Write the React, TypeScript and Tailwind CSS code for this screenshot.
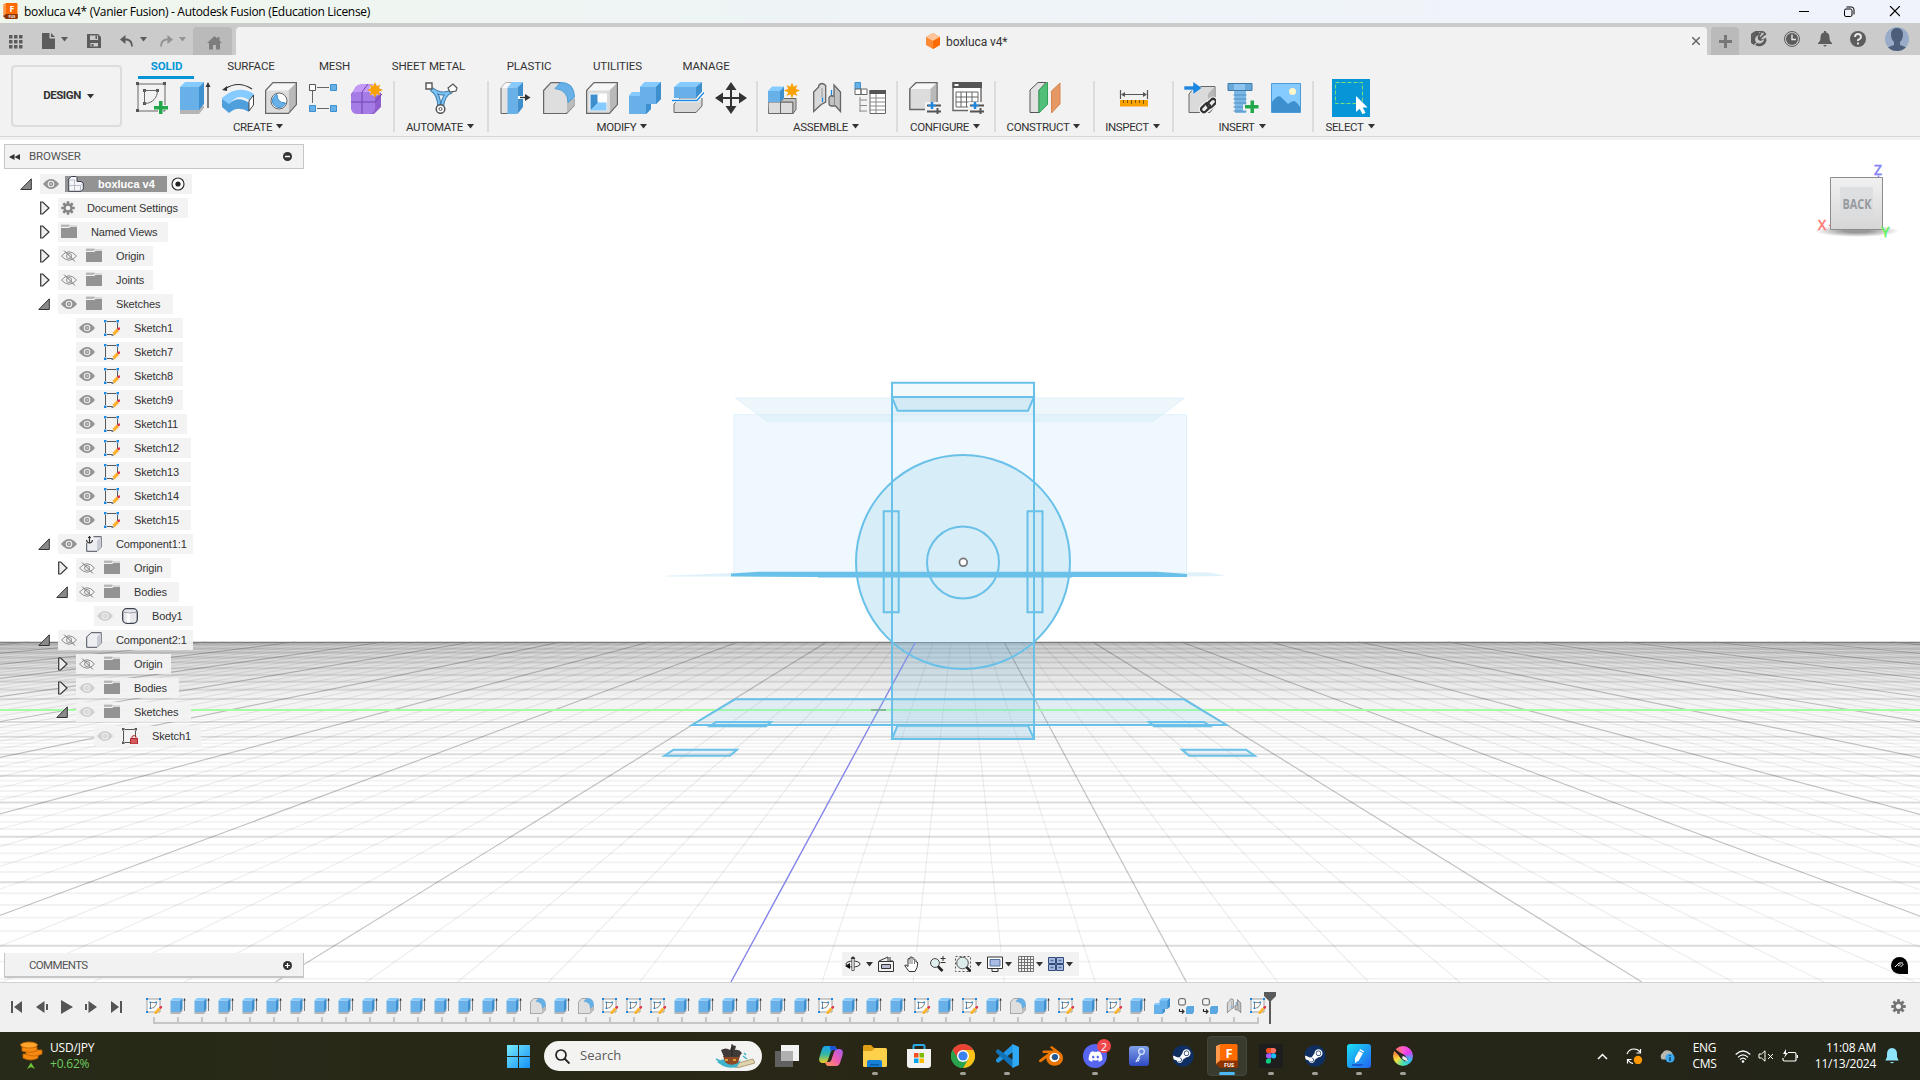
import React from 'react';
import { FaDiscord, FaSteam } from 'react-icons/fa';
import { SiBlender } from 'react-icons/si';

type P = { children: React.ReactNode; className?: string; vb?: string };

const Ico = ({ children, className = 'h-8 w-8', vb = '0 0 32 32' }: P) => (
  <svg viewBox={vb} className={`block shrink-0 ${className}`} fill="none">
    {children}
  </svg>
);

const Caret = ({ className = 'ml-1' }: { className?: string }) => (
  <svg viewBox="0 0 7 5" className={`h-[5px] w-[7px] shrink-0 ${className}`}>
    <path d="M0 0h7L3.5 4.5z" fill="currentColor" />
  </svg>
);

/* ---------- ribbon icons ---------- */

const SketchIcon = () => (
  <Ico>
    <path d="M2 2h27v27H2z" stroke="#666" strokeWidth="1" />
    <g fill="#555">
      <path d="M0 0h3v3H0zM27 0h3v3h-3zM0 27h3v3H0zM7 7h3v3H7zM20 7h3v3h-3zM7 20h3v3H7z" />
    </g>
    <path d="M8.500 8.500h13c0 7-5 13-13 13z" stroke="#666" strokeWidth="1" />
    <path d="M22 18h5v5h5v5h-5v5h-5v-5h-5v-5h5z" fill="#f2f2f2" />
    <path d="M23 19h3.500v5H32v3.500h-5.500V32H23v-4.500h-5V24h5z" fill="#22a84b" />
  </Ico>
);

const ExtrudeShape = () => (
  <>
    <path d="M1 27l4-3h20v2l-5 6H1z" fill="#b5b5b5" />
    <path d="M1 5h19v23H1z" fill="#68b1e8" />
    <path d="M1 5l5-5h19l-5 5z" fill="#85cbff" />
    <path d="M20 5l5-5v22l-5 6z" fill="#3d8fcd" />
    <path d="M29 3v23" stroke="#333" strokeWidth="1.200" />
    <path d="M26.500 5L29 0l2.500 5z" fill="#333" />
  </>
);

const RevolveIcon = () => (
  <Ico>
    <path d="M3 7Q16-2 30 7" stroke="#333" strokeWidth="1.200" />
    <path d="M0 8l5-4v5z" fill="#333" />
    <path d="M0 16Q16 2 32 12v5q-3 3-5 1-12-8-20 5l-7-3z" fill="#85cbff" />
    <path d="M0 17l7 5v9l-7-6zM7 22q9-9 20-1v9q-11-7-20 1z" fill="#4e9fdb" />
    <path d="M27 19l4.500-6v10L27 29z" fill="#fff" stroke="#444" />
  </Ico>
);

const GrayBox = () => (
  <>
    <path d="M.6 8.500L8 .6h23.400L23.500 8.500z" fill="#f7f7f7" />
    <path d="M23.500 8.500L31.400.6v22l-7.900 8.800z" fill="#b9b9b9" />
    <path d="M.6 8.500h22.900v22.900H.6z" fill="#dcdcdc" />
    <path d="M.6 8.500L8 .6h23.400v22l-7.900 8.800H.6z" stroke="#666" strokeWidth="1.200" />
  </>
);

const HoleIcon = () => (
  <Ico>
    <GrayBox />
    <circle cx="14" cy="19" r="8" fill="#fff" stroke="#666" />
    <path d="M12 12.500A6.700 6.700 0 1 0 20.500 21Q12 21 12 12.500z" fill="#68b1e8" stroke="#3d8fcd" />
  </Ico>
);

const PatternIcon = () => (
  <Ico>
    <path d="M9 5.500h12M4.500 9v12M9 26.500h12" stroke="#666" />
    <path d="M1.500 2.500h6v6h-6z" fill="#fff" stroke="#555" />
    <path d="M22.500 2.500h6v6h-6zM1.500 23.500h6v6h-6zM22.500 23.500h6v6h-6z" fill="#68b1e8" stroke="#3d8fcd" />
  </Ico>
);

const Star = ({ x, y }: { x: number; y: number }) => (
  <path
    transform={`translate(${x} ${y})`}
    d="M0-8L1.700-3.700 5.500-5.500 3.700-1.700 8 0 3.700 1.700 5.500 5.500 1.700 3.700 0 8-1.700 3.700-5.500 5.500-3.700 1.700-8 0-3.700-1.700-5.500-5.500-1.700-3.700z"
    fill="#f8a100"
  />
);

const FormIcon = () => (
  <Ico>
    <path d="M7 3h14l9 8v14l-7 7H7q-7-1-7-8V12z" fill="#8f5fd0" />
    <rect y="9" width="24" height="23" rx="6" fill="#a57ce5" />
    <path d="M2 11Q3 3 10 2h14q4 1 6 6l-7 2H6z" fill="#c39af5" />
    <path d="M0 20h24l7-8M11 10v22M11 10l6-8" stroke="#7140b3" />
    <circle cx="24" cy="8" r="6" fill="#f2f2f2" opacity=".6" />
    <Star x={24} y={8} />
  </Ico>
);

const AutomateIcon = () => (
  <Ico className="h-8 w-[34px]" vb="0 0 34 32">
    <path d="M7 7q9 6 8 18M28 9q-9 3-10 16M8 7q8 7 19 3" stroke="#3d7fae" strokeWidth="4" />
    <path d="M7 7q9 6 8 18M28 9q-9 3-10 16M8 7q8 7 19 3" stroke="#7dc3f3" strokeWidth="2" />
    <path d="M2 1h6v6H2z" fill="#fff" stroke="#555" strokeWidth="1.400" />
    <path d="M24 6l5-4 4 4-1 3-6 1z" fill="#fff" stroke="#555" strokeWidth="1.200" />
    <circle cx="16.500" cy="27" r="4.300" fill="#fff" stroke="#555" strokeWidth="1.500" />
    <circle cx="16.500" cy="27" r="1.500" stroke="#555" />
  </Ico>
);

const PressPull = () => (
  <Ico>
    <path d="M1 6l5-5.500h9V25l-6 6.500H1z" fill="#e2e2e2" stroke="#666" />
    <path d="M1 6l5-5.500h9L9 6z" fill="#fafafa" />
    <path d="M7.500 5.500h10V32h-10z" fill="#68b1e8" />
    <path d="M7.500 5.500L12 0h11l-5.500 5.500z" fill="#85cbff" />
    <path d="M17.500 5.500L23 0v25l-5.500 7z" fill="#3d8fcd" />
    <path d="M18 15.500h11" stroke="#fff" strokeWidth="3" />
    <path d="M20 15.500h7" stroke="#333" strokeWidth="1.400" />
    <path d="M25 12l5.500 3.500L25 19z" fill="#333" />
  </Ico>
);

const FilletShape = () => (
  <>
    <path d="M.6 8.500L8 .6h9q9 3 14 17v6l-7.500 7.900H.6z" fill="#dedede" stroke="#666" strokeWidth="1.200" />
    <path d="M24 20l7.400-5v8.500L24 31z" fill="#bcbcbc" />
    <path d="M12 6.500L17.500.6Q31 0 31.500 15L25 20.500Q25 8 12 6.500z" fill="#68b1e8" stroke="#4c9dd8" />
  </>
);

const ShellIcon = () => (
  <Ico>
    <GrayBox />
    <path d="M3.500 11.500h17.500v17H3.500z" fill="#fff" />
    <path d="M4.500 12.500h8v8l-8 8z" fill="#3d8fcd" />
    <path d="M11.500 12.500h9v8h-9z" fill="#fff" />
    <path d="M4.500 28.500l7.500-8h8.500v8z" fill="#85cbff" />
  </Ico>
);

const CombineShape = () => (
  <>
    <path d="M0 14l3-4h8V5l5-5h16v17l-5 5h-5v5l-5 5H0z" fill="#68b1e8" />
    <path d="M11 5l5-5h16l-5 5zM0 14l3.500-4H11v4z" fill="#85cbff" />
    <path d="M27 5l5-5v17l-5 5zM22 22v5l-5 5V22z" fill="#3d8fcd" />
  </>
);

const SplitIcon = () => (
  <Ico>
    <path d="M2 22l6-6h22v8l-6 6.500H2z" fill="#d8d8d8" stroke="#666" />
    <path d="M2 5h22v11H2z" fill="#68b1e8" />
    <path d="M2 5l6-5h22l-6 5z" fill="#85cbff" />
    <path d="M24 5l6-5v10l-6 6z" fill="#3d8fcd" />
    <path d="M0 18.500h25l7-8" stroke="#fff" strokeWidth="3.500" />
    <path d="M0 18.500h25l7-8" stroke="#1b87e0" strokeWidth="1.400" />
  </Ico>
);

const MoveIcon = () => (
  <Ico>
    <path d="M16 5v22M5 16h22" stroke="#333" strokeWidth="2" />
    <path d="M16 0l5.500 8h-11zM16 32l5.500-8h-11zM0 16l8-5.500v11zM32 16l-8-5.500v11z" fill="#333" />
  </Ico>
);

const NewComp = () => (
  <Ico>
    <path d="M0 20h12.500v11.500H.5zM12.500 20h12.500v11.500H12.500z" fill="#dcdcdc" stroke="#666" />
    <path d="M12.500 20l3.500-3.500h12v11L25 31.500V20z" fill="#c4c4c4" stroke="#666" />
    <path d="M0 9h12v11H0z" fill="#68b1e8" />
    <path d="M0 9l4-4.500h12L12 9z" fill="#85cbff" />
    <path d="M12 9l4-4.500V16l-4 4z" fill="#3d8fcd" />
    <Star x={24} y={8.500} />
  </Ico>
);

const JointShape = () => (
  <g transform="translate(2 0)">
    <path d="M.7 10l5-5V3.500q3-4 7 0V20l-4.500 2.500L.7 29.500z" fill="#d8d8d8" stroke="#666" strokeWidth="1.300" />
    <path d="M9 6v9" stroke="#999" />
    <path d="M27.500 29.500l-5-5.500h-3.500q-3 0-3-2.500v-6q2-3 5-1V3l6.500 7z" fill="#c2c2c2" stroke="#666" strokeWidth="1.300" />
    <path d="M21.500 15v8" stroke="#888" />
    <path d="M9.500 15.500V20M18.500 8v5" stroke="#1b87e0" strokeWidth="1.300" />
  </g>
);

const BomIcon = () => (
  <Ico>
    <path d="M1 .5h5.500V7H1z" fill="#68b1e8" stroke="#3d8fcd" />
    <path d="M1 7h6v5.500H1zM7 7h6v5.500H7z" fill="#fff" stroke="#666" />
    <path d="M6 15v15M6 18h7M6 23.500h7M6 29h7" stroke="#888" />
    <path d="M16 9h15.500v22.500H16z" fill="#fff" stroke="#666" />
    <path d="M15.500 8h16.500v4H15.500z" fill="#555" />
    <path d="M16 16h15M16 20h15M16 24h15M16 28h15M22 12v19" stroke="#888" />
  </Ico>
);

const Sliders = () => (
  <>
    <path d="M16 20h16v12H16z" fill="#f2f2f2" />
    <path d="M18 23.500h14M18 29.500h14" stroke="#555" strokeWidth="2" />
    <path d="M23 20v7" stroke="#1b87e0" strokeWidth="2.500" />
    <path d="M19 23.500h8" stroke="#1b87e0" strokeWidth="1.600" />
    <path d="M28.500 26v6" stroke="#555" strokeWidth="2" />
  </>
);

const ConfigIcon = () => (
  <Ico>
    <path d="M.8 7L7 .8h21V21l-6 6.500H.8z" fill="#dcdcdc" stroke="#666" strokeWidth="1.400" />
    <path d="M1.500 7l6-5.500H27L21.500 7z" fill="#f8f8f8" />
    <path d="M21.500 7L27.300 1.500V21l-5.800 6z" fill="#b9b9b9" />
    <Sliders />
  </Ico>
);

const ConfigTable = () => (
  <Ico>
    <path d="M1 1h28v27.500H1z" fill="#fff" stroke="#666" strokeWidth="1.400" />
    <path d="M.500 0H30v6H.500z" fill="#555" />
    <path d="M2.500 2h4v2h-4z" fill="#fff" />
    <path d="M4 10h22v15H4zM4 15h22M4 20h22M9 10v15M14.500 10v15M20 10v15" stroke="#666" />
    <Sliders />
  </Ico>
);

const ConstructIcon = () => (
  <Ico>
    <path d="M1 8l8-7.500h8L10 8v22.500H1z" fill="#e2e2e2" stroke="#555" />
    <path d="M10 8l8.500-8v22.500L10 31z" fill="#52bf78" stroke="#35a25c" />
    <path d="M22.500 9L31 1v21l-8.500 9z" fill="#e59863" stroke="#d58550" />
  </Ico>
);

const InspectIcon = () => (
  <Ico>
    <path d="M2.500 8v9M29.500 8v9M4 12.500h24" stroke="#555" strokeWidth="1.200" />
    <path d="M3 12.500l4-2.500v5zM29 12.500L25 10v5z" fill="#555" />
    <path d="M2 18h28v6.500H2z" fill="#f8a100" />
    <path d="M5.500 18v3M9.500 18v3M13.500 18v4M17.500 18v3M21.500 18v3M25.500 18v4" stroke="#7d5500" />
  </Ico>
);

const InsertLink = () => (
  <Ico>
    <path d="M5 12l6-7.500h20V24l-5 6.500H5z" fill="#dadada" stroke="#666" />
    <path d="M24 12l6.500-7v19L24 30z" fill="#b7b7b7" />
    <path d="M0 4h9V-.500L18 6 9 12.500V8H0z" fill="#1b87e0" stroke="#f2f2f2" strokeWidth=".6" />
    <g stroke="#f2f2f2" strokeWidth="5">
      <rect x="16.500" y="23" width="10" height="5.500" rx="2.750" transform="rotate(-45 21.500 25.750)" />
      <rect x="22.500" y="18.500" width="10" height="5.500" rx="2.750" transform="rotate(-45 27.500 21.250)" />
    </g>
    <g stroke="#333" strokeWidth="2.200">
      <rect x="16.500" y="23" width="10" height="5.500" rx="2.750" transform="rotate(-45 21.500 25.750)" />
      <rect x="22.500" y="18.500" width="10" height="5.500" rx="2.750" transform="rotate(-45 27.500 21.250)" />
    </g>
  </Ico>
);

const BoltIcon = () => (
  <Ico>
    <path d="M1 1.500h24v7H1z" fill="#68a9da" />
    <path d="M7 1.500h11v7H7z" fill="#8cc6f0" />
    <path d="M1 1.500h24v7H1z" stroke="#3e79a8" />
    <path d="M7 9h12v22H8z" fill="#7bb8e6" />
    <path d="M6.500 13h13M6.500 17h13M6.500 21h13M6.500 25h13M6.500 29h13" stroke="#4f8ebf" />
    <path d="M22 17h6v5.500h4v6h-4V33h-6v-4.500h-6v-6h6z" fill="#f2f2f2" />
    <path d="M23.500 18.500H27V23h4.500v3.500H27V31h-3.500v-4.500H18V23h5.500z" fill="#22a84b" />
  </Ico>
);

const ImageIcon = () => (
  <Ico>
    <path d="M2 2h28v28H2z" fill="#85cbff" />
    <path d="M2 20q6-8 9-5l7 7q4-3 6-3 3 1 6 6v5H2z" fill="#3d8fcd" />
    <circle cx="22.500" cy="9.500" r="3.500" fill="#fdf6c8" />
    <path d="M1.500 1.500h29v29h-29z" stroke="#4a9bd6" />
  </Ico>
);

const SelectIcon = () => (
  <Ico className="h-[38px] w-[38px]" vb="0 0 38 38">
    <path d="M0 0h38v38H0z" fill="#0696d7" />
    <path d="M3.500 3.500h27v21h-27z" stroke="#7be07b" strokeDasharray="4 2" />
    <path d="M24 17v16l3.700-3.300 2.800 5.500 3-1.500-2.800-5.200h5z" fill="#fff" />
  </Ico>
);

const groups: { label: string; w: string; icons: React.ReactNode[] }[] = [
  {
    label: 'CREATE',
    w: 'w-[266px] pr-[2px]',
    icons: [<SketchIcon />, <Ico><ExtrudeShape /></Ico>, <RevolveIcon />, <HoleIcon />, <PatternIcon />, <FormIcon />],
  },
  { label: 'AUTOMATE', w: 'w-[92px]', icons: [<AutomateIcon />] },
  {
    label: 'MODIFY',
    w: 'w-[267px] pl-[1px]',
    icons: [<PressPull />, <Ico><FilletShape /></Ico>, <ShellIcon />, <Ico><CombineShape /></Ico>, <SplitIcon />, <MoveIcon />],
  },
  { label: 'ASSEMBLE', w: 'w-[138px]', icons: [<NewComp />, <Ico><JointShape /></Ico>, <BomIcon />] },
  { label: 'CONFIGURE', w: 'w-[96px]', icons: [<ConfigIcon />, <ConfigTable />] },
  { label: 'CONSTRUCT', w: 'w-[97px]', icons: [<ConstructIcon />] },
  { label: 'INSPECT', w: 'w-[77px]', icons: [<InspectIcon />] },
  { label: 'INSERT', w: 'w-[138px]', icons: [<InsertLink />, <BoltIcon />, <ImageIcon />] },
  { label: 'SELECT', w: 'w-[74px]', icons: [<SelectIcon />] },
];

const tabs = [
  ['SOLID', 'w-[56px]'],
  ['SURFACE', 'w-[73px]'],
  ['MESH', 'w-[54px]'],
  ['SHEET METAL', 'w-[94px]'],
  ['PLASTIC', 'w-[67px]'],
  ['UTILITIES', 'w-[70px]'],
  ['MANAGE', 'w-[67px]'],
];

/* ---------- header ---------- */

const FusionLogo = ({ className }: { className: string }) => (
  <Ico className={className} vb="0 0 22 24">
    <path d="M0 2L5 0v22l-5-2z" fill="#ff9a4d" />
    <path d="M4 0h16q1.500 0 1.500 1.500V17H4z" fill="#ff6b00" />
    <path d="M0 20l4-3.500h18V22q0 2-2 2H4z" fill="#8c3400" />
    <text x="13" y="13.500" fontSize="13" fontWeight="700" fill="#fff" textAnchor="middle" fontFamily="Open Sans, sans-serif">F</text>
    <text x="13" y="22.500" fontSize="5.500" fontWeight="700" fill="#fff" textAnchor="middle" fontFamily="Open Sans, sans-serif">FUS</text>
  </Ico>
);

const TitleBar = () => (
  <div className="flex h-[23px] items-center bg-linear-to-r from-[#eff6ec] via-[#eef4f8] to-[#f0f3fb] pl-[3px]">
    <FusionLogo className="-mt-px h-4 w-[15px]" />
    <div className="ml-[6px] text-[12px] tracking-[-0.3px] text-black font-['Open_Sans',sans-serif]">
      boxluca v4* (Vanier Fusion) - Autodesk Fusion (Education License)
    </div>
    <Ico className="mr-5 ml-auto h-3 w-[101px]" vb="0 0 101 12">
      <path d="M0 5.500h10" stroke="#000" />
      <rect x="45.500" y="3" width="7.500" height="7.500" rx="1.500" stroke="#000" />
      <path d="M47.500 1h5q2.500 0 2.500 2.500V8.500" stroke="#000" />
      <path d="M91 0l10 10M101 0L91 10" stroke="#000" strokeWidth="1.200" />
    </Ico>
  </div>
);

const TabBar = () => (
  <div className="flex h-8 bg-[#cbcbcb] pt-1 text-[#5c5c5c]">
    <div className="flex w-[193px] items-center pb-[7px]">
      <Ico className="mt-2 ml-2 h-4 w-4" vb="0 0 16 16">
        <path
          d="M1 1h3.500v3.500H1zM6 1h3.500v3.500H6zM11 1h3.500v3.500H11zM1 6h3.500v3.500H1zM6 6h3.500v3.500H6zM11 6h3.500v3.500H11zM1 11h3.500v3.500H1zM6 11h3.500v3.500H6zM11 11h3.500v3.500H11z"
          fill="currentColor"
        />
      </Ico>
      <Ico className="mt-1.5 ml-[17px] h-4 w-[14px]" vb="0 0 14 16">
        <path d="M1 0h7.500v5.500H14V16H1zM10 0l4 4h-4z" fill="currentColor" />
      </Ico>
      <Caret className="mt-1 ml-1.5" />
      <Ico className="mt-1.5 ml-[19px] h-[14px] w-[14px]" vb="0 0 14 14">
        <path d="M0 0h11l3 3v11H0z" fill="currentColor" />
        <path d="M3 1.500h8V6H3zM3.500 9h7.500v3.500H3.500z" fill="#cbcbcb" />
        <path d="M8.500 1.500H10V5H8.500zM4.500 10h2v2.500h-2z" fill="currentColor" />
      </Ico>
      <Ico className="mt-1.5 ml-[19px] h-3 w-[13px]" vb="0 0 13 12">
        <path d="M3 4.500h4q5 1 5 7" stroke="currentColor" strokeWidth="1.800" />
        <path d="M5.500 0v9L0 4.500z" fill="currentColor" />
      </Ico>
      <Caret className="mt-1 ml-[7px]" />
      <Ico className="mt-1.5 ml-[13px] h-3 w-[13px] opacity-50" vb="0 0 13 12">
        <path d="M10 4.500H6q-5 1-5 7" stroke="currentColor" strokeWidth="1.800" />
        <path d="M7.500 0v9L13 4.500z" fill="currentColor" />
      </Ico>
      <Caret className="mt-1 ml-[6px] opacity-50" />
    </div>
    <div className="flex w-[39px] items-center justify-center rounded-t-[4px] bg-[#bababa] pt-1 pl-[3px]">
      <Ico className="h-[14px] w-[15px]" vb="0 0 15 14">
        <path d="M7.500 0L0 7h2v6.500h4V9h3v4.500h4V7h2l-2.500-2.500V1H10.500v1.800z" fill="#7d7d7d" />
      </Ico>
    </div>
    <div className="ml-1 flex w-[1471px] items-center rounded-t-[4px] bg-[#f2f2f2] text-[#333]">
      <Ico className="ml-[690px] h-4 w-[14px]" vb="0 0 14 16">
        <path d="M7 0l7 4v8l-7 4-7-4V4z" fill="#ff8a35" />
        <path d="M7 0l7 4-7 4-7-4z" fill="#ffc49a" />
        <path d="M14 4v8l-7 4V8z" fill="#ff6b00" />
      </Ico>
      <span className="mt-0.5 ml-[6px] text-[12px] tracking-[-0.1px] font-['Roboto',sans-serif]">boxluca v4*</span>
      <Ico className="mr-[7px] ml-auto h-2 w-2" vb="0 0 8 8">
        <path d="M0 0l8 8M8 0L0 8" stroke="#666" strokeWidth="1.500" />
      </Ico>
    </div>
    <div className="ml-1 flex w-7 items-center justify-center rounded-t-[4px] bg-[#bababa]">
      <Ico className="h-[13px] w-[13px]" vb="0 0 13 13">
        <path d="M5 0h3v5h5v3H8v5H5V8H0V5h5z" fill="#777" />
      </Ico>
    </div>
    <div className="ml-3 flex items-start gap-[17px] pt-1">
      <Ico className="h-4 w-4" vb="0 0 16 16">
        <path d="M6 1.200A7 7 0 0 0 3 13l2.500-1.500A4 4 0 0 1 6 5l1.500-1z" fill="#5c5c5c" />
        <path d="M9.500 1L6.500 6.500l1 2.500 2.500 1L15 6.500l.500 3A7.500 7.500 0 0 1 4 14l2-2q5 1.500 7-3" fill="#5c5c5c" />
        <path d="M5 1q5-2.500 9 2l-3 3-2-2zM6 1.500A6 6 0 0 0 3.500 13" stroke="#5c5c5c" strokeWidth="2.200" />
        <path d="M12.500 2L9 5.500M14 5l-3.500 3" stroke="#cbcbcb" strokeWidth="1.200" />
      </Ico>
      <Ico className="h-4 w-4" vb="0 0 16 16">
        <circle cx="8" cy="8" r="7.500" stroke="#5c5c5c" />
        <circle cx="8" cy="8" r="6" fill="#5c5c5c" />
        <path d="M8 3.500V8.500h4" stroke="#e8e8e8" strokeWidth="1.400" />
      </Ico>
      <Ico className="h-4 w-4" vb="0 0 16 16">
        <path d="M7 0h2v1.500q3.500.5 3.500 5 0 4 2.500 5.500v1H1v-1q2.500-1.500 2.500-5.500 0-4.500 3.500-5zM6 14h4l-2 1.800z" fill="#5c5c5c" />
      </Ico>
      <Ico className="h-4 w-4" vb="0 0 16 16">
        <circle cx="8" cy="8" r="8" fill="#5c5c5c" />
        <path d="M5 6q0-3 3-3t3 2.700Q11 7.500 8 9v1M8 11.500v2" stroke="#e8e8e8" strokeWidth="1.900" />
      </Ico>
      <Ico className="-mt-1 ml-0.5 h-6 w-6" vb="0 0 24 24">
        <circle cx="12" cy="12" r="12" fill="#98acc9" />
        <path d="M12 1c-4 0-6 3-6 6 0 4 1 6 3 8v3q-4 1-6 2.500Q7 24 12 24t9-3.500Q19 19 15 18v-3c2-2 3-4 3-8 0-3-2-6-6-6z" fill="#4c5e79" />
      </Ico>
    </div>
  </div>
);

const Ribbon = () => (
  <div className="flex h-[85px] border-b-4 border-[#f2f2f2] bg-[#f2f2f2] text-[11.5px] text-[#333] font-['Roboto',sans-serif]">
    <div className="flex h-[82px] w-full border-b border-[#d6d6d6]">
      <div className="mt-[10px] ml-[11px] flex h-[62px] w-[111px] items-center justify-center rounded-[4px] border-2 border-[#dcdcdc] pl-1 text-[11.5px] font-bold tracking-[-0.45px]">
        DESIGN
        <Caret className="ml-[6px]" />
      </div>
      <div className="flex flex-col">
        <div className="ml-4 flex h-6 gap-5 leading-[22px]">
          {tabs.map(([t, w], i) => (
            <div
              key={t}
              className={`${w} h-6 whitespace-nowrap border-b-3 pl-px text-center tracking-[-0.1px] ${
                i === 0 ? 'border-[#0696d7] font-bold text-[#0696d7]' : 'border-transparent'
              }`}
            >
              {t}
            </div>
          ))}
        </div>
        <div className="ml-[5px] flex">
          {groups.map((g) => (
            <div key={g.label} className="flex">
              <div className={`${g.w} flex flex-col items-center`}>
                <div className="mt-px flex h-[36px] items-center gap-[11px]">
                  {g.icons.map((ic, i) => (
                    <React.Fragment key={i}>{ic}</React.Fragment>
                  ))}
                </div>
                <div className="mt-[3px] flex items-center pr-[2px] leading-4 tracking-[-0.35px]">
                  {g.label}
                  <Caret className="-mt-0.5 ml-1" />
                </div>
              </div>
              {g.label !== 'SELECT' && <div className="mt-0.5 h-[51px] w-0.5 bg-[#dcdcdc]" />}
            </div>
          ))}
        </div>
      </div>
    </div>
  </div>
);

/* ---------- browser tree ---------- */

const Eye = ({ mode }: { mode: string }) => (
  <Ico className="h-3 w-4" vb="0 0 16 12">
    {mode === 'off' ? (
      <>
        <path d="M.5 6Q8-2.500 15.500 6 8 14.500.5 6z" stroke="#8c8c8c" />
        <circle cx="8" cy="6" r="2.500" stroke="#8c8c8c" />
        <path d="M3 .5l11 11" stroke="#777" />
      </>
    ) : (
      <g opacity={mode === 'dim' ? 0.35 : 1}>
        <path d="M0 6Q8-4 16 6 8 16 0 6z" fill="#939393" />
        <circle cx="8" cy="6" r="3.300" fill="#f2f2f2" />
        <circle cx="8" cy="6" r="2.200" fill="#939393" />
        <circle cx="8" cy="6" r=".8" fill="#f2f2f2" />
      </g>
    )}
  </Ico>
);

const TreeIcon = ({ kind }: { kind: string }) => {
  if (kind === 'folder')
    return (
      <Ico className="h-4 w-4" vb="0 0 16 16">
        <path d="M0 4h8l1.500-1H16v11H0z" fill="#939393" />
        <path d="M0 2.500h7.500l1-1.500H0zM9 2h7" stroke="#b5b5b5" strokeWidth=".8" fill="#b5b5b5" />
      </Ico>
    );
  if (kind === 'sketch' || kind === 'locked') {
    const lock = kind === 'locked';
    return (
      <Ico className="h-4 w-4" vb="0 0 16 16">
        <path d="M3 1.500h9M1.500 3v10M13.500 3v6M3 14.500h5" stroke="#555" />
        <path d="M0 0h2.500v2.500H0zM12.500 0H15v2.500h-2.500zM0 13.500h2.500V16H0z" fill={lock ? '#555' : '#1b87e0'} />
        {lock ? (
          <>
            <path d="M8.500 10.500h7v5.500h-7z" fill="#d35a5f" stroke="#b3282d" />
            <path d="M10 10V8.500q2-2 4 0V10" stroke="#b3282d" />
          </>
        ) : (
          <>
            <path d="M8.500 13l4-4.500 2.500 2.500-4.500 4.500z" fill="#fbb42c" />
            <path d="M13 9l1.200-1.500H16v2l-1.500 1z" fill="#e8334a" />
            <path d="M7.500 14.200h2V16h-2z" fill="#777" />
          </>
        )}
      </Ico>
    );
  }
  if (kind === 'gear') return <Gear className="-mr-0.5 h-[14px] w-[14px] text-[#858585]" />;
  if (kind === 'body')
    return (
      <Ico className="h-4 w-4" vb="0 0 16 16">
        <rect x=".7" y=".7" width="14.600" height="14.600" rx="4" fill="#e8e9ec" stroke="#3c4250" strokeWidth="1.300" />
        <path d="M5 4h3v10.500H5z" fill="#fff" />
        <path d="M1 4q7 2 14 0" stroke="#9da0a8" />
      </Ico>
    );
  if (kind === 'root')
    return (
      <Ico className="h-4 w-4" vb="0 0 16 16">
        <path d="M.7 3l2.500-2.500H8l1 1V5.500h4l2.300 1.500V13L13 15.300H.7z" fill="#f5f6f9" stroke="#3c4250" />
        <path d="M6.500 9.500h6l2.500-2M12.500 9.500v5.500M6.500 4v11M1 9.500h5.500M1 4h5.500" stroke="#b9bcc6" />
      </Ico>
    );
  return (
    <Ico className="h-4 w-4" vb="0 0 16 16">
      <path d="M.7 5L5 .7h10.300V11L11 15.300H.7z" fill="#eceef1" stroke="#4a4f5c" />
      <path d="M11 5l4.300-4.300V11L11 15.300z" fill="#c9ccd3" />
      {kind === 'anchor' && (
        <>
          <path d="M0-1h7.500v8H0z" fill="#f2f2f2" />
          <path d="M3.500 0v6.500M2 1.500h3M.5 4q.5 3 3 3t3-3" stroke="#333" strokeWidth="1.200" />
        </>
      )}
    </Ico>
  );
};

const Gear = ({ className }: { className: string }) => (
  <Ico className={className} vb="0 0 16 16">
    <g stroke="currentColor" strokeWidth="3">
      <path d="M8 .3v15.400M.3 8h15.400M2.600 2.600l10.800 10.800M13.400 2.600L2.600 13.400" />
    </g>
    <circle cx="8" cy="8" r="5.300" fill="currentColor" />
    <circle cx="8" cy="8" r="2.700" fill="#f2f2f2" />
  </Ico>
);

const Arrow = ({ open }: { open: boolean }) =>
  open ? (
    <Ico className="mr-2 h-3 w-3" vb="0 0 12 12">
      <path d="M11.300 0.800v10.700H.800z" fill="#8a8a8a" stroke="#333" />
    </Ico>
  ) : (
    <Ico className="mr-2 h-[14px] w-[10px]" vb="0 0 10 14">
      <path d="M.7 1h2L9 7l-6.300 6h-2z" fill="#eee" stroke="#333" strokeWidth="1.200" />
    </Ico>
  );

type Row = { t: string; lv: number; w: string; arrow?: 'open' | 'closed'; eye?: string; icon: string };

const rows: Row[] = [
  { t: 'Document Settings', lv: 1, w: 'w-[130px]', arrow: 'closed', icon: 'gear' },
  { t: 'Named Views', lv: 1, w: 'w-[110px]', arrow: 'closed', icon: 'folder' },
  { t: 'Origin', lv: 1, w: 'w-[95px]', arrow: 'closed', eye: 'off', icon: 'folder' },
  { t: 'Joints', lv: 1, w: 'w-[95px]', arrow: 'closed', eye: 'off', icon: 'folder' },
  { t: 'Sketches', lv: 1, w: 'w-[115px]', arrow: 'open', eye: 'on', icon: 'folder' },
  { t: 'Sketch1', lv: 2, w: 'w-[107px]', eye: 'on', icon: 'sketch' },
  { t: 'Sketch7', lv: 2, w: 'w-[107px]', eye: 'on', icon: 'sketch' },
  { t: 'Sketch8', lv: 2, w: 'w-[107px]', eye: 'on', icon: 'sketch' },
  { t: 'Sketch9', lv: 2, w: 'w-[107px]', eye: 'on', icon: 'sketch' },
  { t: 'Sketch11', lv: 2, w: 'w-[111px]', eye: 'on', icon: 'sketch' },
  { t: 'Sketch12', lv: 2, w: 'w-[115px]', eye: 'on', icon: 'sketch' },
  { t: 'Sketch13', lv: 2, w: 'w-[115px]', eye: 'on', icon: 'sketch' },
  { t: 'Sketch14', lv: 2, w: 'w-[115px]', eye: 'on', icon: 'sketch' },
  { t: 'Sketch15', lv: 2, w: 'w-[115px]', eye: 'on', icon: 'sketch' },
  { t: 'Component1:1', lv: 1, w: 'w-[135px]', arrow: 'open', eye: 'on', icon: 'anchor' },
  { t: 'Origin', lv: 2, w: 'w-[95px]', arrow: 'closed', eye: 'off', icon: 'folder' },
  { t: 'Bodies', lv: 2, w: 'w-[103px]', arrow: 'open', eye: 'off', icon: 'folder' },
  { t: 'Body1', lv: 3, w: 'w-[99px]', eye: 'dim', icon: 'body' },
  { t: 'Component2:1', lv: 1, w: 'w-[135px]', arrow: 'open', eye: 'off', icon: 'comp' },
  { t: 'Origin', lv: 2, w: 'w-[95px]', arrow: 'closed', eye: 'off', icon: 'folder' },
  { t: 'Bodies', lv: 2, w: 'w-[103px]', arrow: 'closed', eye: 'dim', icon: 'folder' },
  { t: 'Sketches', lv: 2, w: 'w-[115px]', arrow: 'open', eye: 'dim', icon: 'folder' },
  { t: 'Sketch1', lv: 3, w: 'w-[107px]', eye: 'dim', icon: 'locked' },
];

const gutter = ['w-10', 'w-[58px]', 'w-[76px]', 'w-[94px]'];

const Browser = () => (
  <div className="relative flex w-[308px] flex-col pt-1">
    <div className="ml-1 flex h-[25px] w-[300px] items-center border border-[#c6c6c6] bg-[#f2f2f2] text-[11.5px] tracking-[-0.15px] text-[#555] font-['Roboto',sans-serif]">
      <Ico className="ml-1 h-[6px] w-[11px]" vb="0 0 11 6">
        <path d="M5.500 0v6L0 3zM11 0v6L5.500 3z" fill="#333" />
      </Ico>
      <span className="ml-[9px]">BROWSER</span>
      <Ico className="mr-[11px] ml-auto h-[9px] w-[9px]" vb="0 0 9 9">
        <circle cx="4.500" cy="4.500" r="4.500" fill="#333" />
        <path d="M2 4.500h5" stroke="#fff" strokeWidth="1.500" />
      </Ico>
    </div>
    <div className="mt-[5px] flex flex-col gap-1 text-[11px] tracking-[-0.12px] text-[#333] font-['Liberation_Sans',sans-serif]">
      <div className="flex h-5 items-center">
        <div className="flex w-10 justify-end">
          <Arrow open />
        </div>
        <div className="flex h-5 w-[152px] items-center bg-[#f2f2f2] pl-[3px]">
          <Eye mode="on" />
          <div className="ml-[6px] flex h-4 w-[102px] items-center bg-[#939393] pl-[3px] font-bold tracking-normal text-white">
            <TreeIcon kind="root" />
            <span className="ml-[14px]">boxluca v4</span>
          </div>
          <Ico className="ml-1 h-[14px] w-[14px]" vb="0 0 14 14">
            <circle cx="7" cy="7" r="6" fill="#fff" stroke="#333" strokeWidth="1.200" />
            <circle cx="7" cy="7" r="2.600" fill="#222" />
          </Ico>
        </div>
      </div>
      {rows.map((r, i) => (
        <div key={i} className="flex h-5 items-center">
          <div className={`${gutter[r.lv]} flex justify-end`}>{r.arrow && <Arrow open={r.arrow === 'open'} />}</div>
          <div className={`${r.w} flex h-5 items-center bg-[#f2f2f2]/95 pl-[3px] whitespace-nowrap`}>
            {r.eye && (
              <div className="mr-[9px]">
                <Eye mode={r.eye} />
              </div>
            )}
            <TreeIcon kind={r.icon} />
            <span className="ml-[14px]">{r.t}</span>
          </div>
        </div>
      ))}
    </div>
  </div>
);

/* ---------- 3D canvas ---------- */

const VX = 960;
const VY = 559.8;
const TOP = 642;
const BOT = 982;

const rays = Array.from({ length: 121 }, (_, i) => i - 60).map((k) => {
  const m = (k / 5) * 1.0788 - 0.5426;
  return { k, x1: VX + m * (TOP - VY), x2: VX + m * (BOT - VY) };
});
const rungs = Array.from({ length: 97 }, (_, i) => i - 42)
  .map((k) => ({ k, y: 560 + 1 / (0.00668 + k * 0.0001022) }))
  .filter((r) => r.y > TOP && r.y < BOT);

const Scene = () => (
  <svg viewBox="0 140 1920 842" className="absolute inset-0 h-[842px] w-[1920px]" fill="none">
    <defs>
      <linearGradient id="haze" x1="0" x2="0" y1="0" y2="1">
        <stop offset="0" stopColor="#000" stopOpacity=".08" />
        <stop offset="1" stopColor="#000" stopOpacity="0" />
      </linearGradient>
      <linearGradient id="cube" x1="0" x2="0" y1="0" y2="1">
        <stop offset="0" stopColor="#f1f1f1" />
        <stop offset="1" stopColor="#d6d6d6" />
      </linearGradient>
      <radialGradient id="shade">
        <stop offset=".3" stopColor="#000" stopOpacity=".4" />
        <stop offset="1" stopColor="#000" stopOpacity="0" />
      </radialGradient>
    </defs>
    <path d="M0 642h1920v60H0z" fill="url(#haze)" />
    {rungs.map((r) => (
      <path
        key={r.k}
        d={`M0 ${r.y}H1920`}
        stroke="#000"
        strokeOpacity={r.k % 5 === 0 ? 0.14 : 0.05}
        strokeWidth={r.k % 5 === 0 ? 2 : 1.8}
      />
    ))}
    {rays.map((r) => (
      <path
        key={r.k}
        d={`M${r.x1} ${TOP}L${r.x2} ${BOT}`}
        stroke="#000"
        strokeOpacity={r.k % 5 === 0 ? 0.23 : 0.075}
        strokeWidth={r.k % 5 === 0 ? 1.2 : 1.1}
      />
    ))}
    <path d="M0 642.500H1920" stroke="#7c7c7c" strokeWidth="1.300" />
    <path d="M0 710H1920" stroke="#a4ffa4" strokeWidth="2" />
    <path d="M915.500 642L731 982" stroke="#8484f5" strokeWidth="1.200" />
    <path d="M871 710h15" stroke="#78a078" strokeWidth="1.500" />

    <path d="M734 414.700h452.500V574H734z" fill="#eff8fe" stroke="#dff1fa" />
    <path d="M735.500 398h449l-31.800 23.700H767.800z" fill="#cfe9f5" fillOpacity=".4" stroke="#dff1fa" />
    <path d="M892 382.700h142v32H892z" fill="#7cc4e8" fillOpacity=".1" />
    <path d="M892 642a107 107 0 1 1 142 0z" fill="#d7edf7" />
    <path d="M892 642a107 107 0 0 0 142 0z" fill="#7cc4e8" fillOpacity=".32" />
    <path d="M892 642a107 107 0 0 0 142 0v97H892z" fill="#7cc4e8" fillOpacity=".2" />
    <g stroke="#69c0e8" strokeWidth="2">
      <path d="M892 382.700h142V739H892z" />
      <circle cx="963" cy="562" r="107" />
      <circle cx="963" cy="562.500" r="36" />
      <path d="M892 397h142l-6 13.700H897.500z" fill="#7cc4e8" fillOpacity=".12" />
      <path d="M883.700 511.300h15v101h-15zM1027.500 511.300h15v101h-15z" fill="#7cc4e8" fillOpacity=".06" />
      <path d="M735 699.300h449l42.500 25.700H692z" fill="#7cc4e8" fillOpacity=".16" />
      <path d="M897.500 725.700H1028l6 13.300H892z" fill="#7cc4e8" fillOpacity=".1" />
      <path
        d="M716 722h55l-5 4.300h-56zM1149 722h55l6 4.300h-56zM673.500 749.700H737l-7 6h-65.500zM1182 749.700h64l8.700 6H1189z"
        fill="#7cc4e8"
        fillOpacity=".15"
      />
    </g>
    <path d="M666 575.800l66-2.800v3.500h-66zM1187 574.500l-30-2.500 52 .5 17 3.500-39 .500z" fill="#dff1fa" />
    <path d="M731 576.500v-3l28-1.800h398l30 2.200v3.100h-115v.600H818V577z" fill="#69c0e8" />
    <circle cx="963.300" cy="562.300" r="3.900" fill="#fff" stroke="#777" strokeWidth="1.700" />

    <ellipse cx="1857" cy="231" rx="42" ry="6" fill="url(#shade)" />
    <path d="M1830.500 177.500h52v52h-52z" fill="url(#cube)" stroke="#8c8c8c" />
    <path d="M1840 187h33v33h-33z" fill="#d9dcdf" fillOpacity=".8" />
    <text x="1857" y="209" textAnchor="middle" fontSize="15" fontWeight="700" fill="#969a9e" textLength="29" lengthAdjust="spacingAndGlyphs" fontFamily="Open Sans, sans-serif">BACK</text>
    <g fontSize="14" fontFamily="Open Sans, sans-serif" textAnchor="middle">
      <text x="1878" y="174.500" fill="#8484f5" stroke="#8484f5" strokeWidth=".6">Z</text>
      <text x="1822" y="230" fill="#ff7a7a" stroke="#ff7a7a" strokeWidth=".6">X</text>
      <text x="1885.500" y="237" fill="#5cf55c" stroke="#5cf55c" strokeWidth=".6">Y</text>
    </g>
    <path d="M1829 225.500h1.500" stroke="#ff7a7a" strokeWidth="1.500" />
    <path d="M1878.500 175.500v1.500" stroke="#8484f5" strokeWidth="1.500" />
  </svg>
);

const NavBar = () => (
  <div className="absolute top-[812px] left-[842px] flex h-6 w-[237px] items-center bg-[#f2f2f2] text-[#333]">
    <Ico className="ml-[3px] h-4 w-4" vb="0 0 16 16">
      <ellipse cx="8" cy="8" rx="7" ry="3" stroke="#333" />
      <path d="M6.800 1.500h2.400v13H6.800z" stroke="#444" strokeWidth=".8" fill="#f2f2f2" />
      <path d="M8 0l2.500 3h-5z" fill="#333" />
      <path d="M0 10l5-3v6z" fill="#111" />
    </Ico>
    <Caret className="ml-[5px]" />
    <Ico className="ml-[5px] h-4 w-4" vb="0 0 16 16">
      <path d="M.5 5.500h15v10H.5zM1 5l9-4v4M12 1v4h3" stroke="#333" />
      <path d="M3.500 8.500h9v4h-9z" fill="#b8bdd0" stroke="#333" />
    </Ico>
    <Ico className="ml-[10px] h-4 w-4" vb="0 0 16 16">
      <path d="M5 15.500L.7 9.500q1-1.500 3.300 1V3q1-1.500 2 0V1.500q1-1.500 2 0V2q1.200-1.200 2 .5V4q1.500-1 2 .5V6q1.500-.5 1.800 1-.3 5-2.800 8.500z" fill="#fff" stroke="#333" />
      <path d="M6 3v5M8 2v6M10.500 3v5" stroke="#777" />
    </Ico>
    <Ico className="ml-[10px] h-4 w-4" vb="0 0 16 16">
      <circle cx="5" cy="7" r="4.400" fill="#e0f0ee" stroke="#444" />
      <path d="M8 10.500l4.500 4.500" stroke="#222" strokeWidth="2.600" />
      <path d="M13 0v5M10.500 2.500h5M10.500 6.500h5" stroke="#333" />
    </Ico>
    <Ico className="ml-[9px] h-4 w-4" vb="0 0 16 16">
      <path d="M.5.5h15v15H.5z" stroke="#555" strokeDasharray="2 2" />
      <circle cx="7.500" cy="7" r="5.800" fill="#dcecea" stroke="#555" />
      <path d="M11.500 11l4 4.500" stroke="#222" strokeWidth="2.600" />
    </Ico>
    <Caret className="ml-1" />
    <Ico className="ml-[5px] h-4 w-4" vb="0 0 16 16">
      <path d="M.5 1h15v11.500H.5z" fill="#fff" stroke="#333" />
      <path d="M3 3.500h10V10H3z" fill="#a9bde4" stroke="#55709f" />
      <path d="M5 13v2.500h6V13" stroke="#333" />
    </Ico>
    <Caret className="ml-0.5" />
    <Ico className="ml-[6px] h-4 w-4" vb="0 0 16 16">
      <path d="M.5.500h15v15H.5zM3.500 0v16M6.500 0v16M9.500 0v16M12.500 0v16M0 3.500h16M0 6.500h16M0 9.500h16M0 12.500h16" stroke="#666" strokeWidth=".9" />
    </Ico>
    <Caret className="ml-0.5" />
    <Ico className="ml-[5px] h-[14px] w-4" vb="0 0 16 14">
      <path d="M.5.5h7v6h-7zM8.500.500h7v6h-7zM.5 7.500h7v6h-7zM8.500 7.500h7v6h-7z" fill="#a9bde4" stroke="#334a78" />
      <path d="M2.500 3.500h3M10.500 3.500h3M2.500 10.500h3M10.500 10.500h3" stroke="#55709f" strokeWidth="1.500" />
    </Ico>
    <Caret className="ml-0.5" />
  </div>
);

const Comments = () => (
  <div className="absolute top-[813px] left-1 flex h-[25px] w-[300px] items-center border-x border-b-2 border-[#c6c6c6] bg-[#f2f2f2] pt-0.5 pl-6 text-[11.5px] tracking-[-0.65px] text-[#555] font-['Roboto',sans-serif]">
    COMMENTS
    <Ico className="mr-[11px] ml-auto h-[9px] w-[9px]" vb="0 0 9 9">
      <circle cx="4.500" cy="4.500" r="4.500" fill="#333" />
      <path d="M2 4.500h5M4.500 2v5" stroke="#fff" strokeWidth="1.200" />
    </Ico>
  </div>
);

/* ---------- timeline ---------- */

const TimelineIcon = ({ c }: { c: string }) => {
  if (c === 'E') return <Ico className="h-4 w-4"><ExtrudeShape /></Ico>;
  if (c === 'F') return <Ico className="h-4 w-4"><FilletShape /></Ico>;
  if (c === 'C') return <Ico className="h-4 w-4"><CombineShape /></Ico>;
  if (c === 'J') return <Ico className="h-4 w-4"><JointShape /></Ico>;
  if (c === 'P')
    return (
      <Ico className="h-4 w-4" vb="0 0 16 16">
        <path d="M.7 2q.3-1.300 1.300-1.300h4q1.300 0 1.300 1.300v4Q7 7 6 7H2Q.7 7 .7 6z" fill="#f4f4f4" stroke="#555" />
        <path d="M1.500 11v2.500H5M4 11.500l2 2-2 2" stroke="#222" strokeWidth="1.100" />
        <path d="M8 9.500L9.500 8H16v6l-1.500 2H8z" fill="#5aa8e2" />
      </Ico>
    );
  return (
    <Ico className="h-4 w-4" vb="0 0 16 16">
      <path d="M1 1h13v13H1z" fill="#fbfbfb" stroke="#8a8a8a" strokeWidth=".8" />
      <path d="M4.500 4.500h6q0 5-6 6z" stroke="#777" strokeWidth=".9" />
      <path d="M0 0h2v2H0zM13 0h2v2h-2zM0 13h2v2H0zM3.500 3.500H5V5H3.500zM9.500 3.500H11V5H9.500zM3.500 9.500H5V11H3.500z" fill="#1b87e0" />
      <path d="M8.500 14l4-4.500 2 2L10.500 16h-2z" fill="#fbb42c" />
      <path d="M13 9.500L14.500 8H16v2l-1.500 1z" fill="#e8334a" />
    </Ico>
  );
};

const steps = ('S' + 'E'.repeat(15) + 'FEFSSSEEEEEESEEESESEFESESECPPJS').split('');

const Timeline = () => (
  <div className="flex h-[50px] border-t border-[#d2d2d2] bg-[#f0f0f0]">
    <div className="mt-[17px] flex w-[142px] items-start text-[#555]">
      <Ico className="ml-[11px] h-[14px] w-[112px]" vb="0 0 112 14">
        <path
          d="M0 1h2v12H0zM11 1v12L3 7zM33.500 1v12L25 7zM35 4h2v6h-2zM50 0l12 7-12 7zM74 4h2v6h-2zM77.500 1v12L86 7zM100 1v12l8-6zM109 1h2v12h-2z"
          fill="currentColor"
        />
      </Ico>
    </div>
    <div className="mt-[15px] flex">
      {steps.map((c, i) => (
        <div key={i} className="flex w-6 flex-col items-center">
          <TimelineIcon c={c} />
          <div className="mt-[3px] h-[5px] w-0.5 bg-[#c6c6c6]" />
          <div
            className={`h-0.5 bg-[#c6c6c6] ${i === 0 ? 'w-[13px] self-end' : i === steps.length - 1 ? 'w-[13px] self-start' : 'w-6'}`}
          />
        </div>
      ))}
    </div>
    <Ico className="mt-[9px] -ml-1.5 h-8 w-3" vb="0 0 12 32">
      <path d="M0 0h12v4L7 9v23H5V9L0 4z" fill="#5a5a5a" />
    </Ico>
    <Gear className="mt-4 mr-[14px] ml-auto h-[15px] w-[15px] text-[#757575]" />
  </div>
);

/* ---------- taskbar ---------- */

const Chrome = () => (
  <Ico className="h-6 w-6" vb="0 0 24 24">
    <circle cx="12" cy="12" r="12" fill="#2ba24c" />
    <path d="M12 12L1.600 6A12 12 0 0 1 22.400 6z" fill="#ea4335" />
    <path d="M12 6h10.400A12 12 0 0 1 12 24l5.200-9z" fill="#fbc116" />
    <path d="M1.600 6L7 15l5-9z" fill="#ea4335" />
    <path d="M1.600 6A12 12 0 0 0 12 24l5-9H6.800z" fill="#2ba24c" />
    <circle cx="12" cy="12" r="6" fill="#fff" />
    <circle cx="12" cy="12" r="4.600" fill="#3b82f0" />
  </Ico>
);

const Steam = () => (
  <div className="flex h-[22px] w-[22px] items-center justify-center">
    <div className="flex h-5 w-5 items-center justify-center rounded-full bg-white">
      <FaSteam className="h-[22px] w-[22px] shrink-0 text-[#0f2f62]" />
    </div>
  </div>
);

const apps: { key: string; el: React.ReactNode; dot?: boolean; active?: boolean }[] = [
  {
    key: 'views',
    el: (
      <Ico className="h-[22px] w-6" vb="0 0 24 22">
        <path d="M0 6h18v16H0z" fill="#606060" />
        <path d="M6 0h18v16H6z" fill="#f2f2f2" />
        <path d="M6 6h12v10H6z" fill="#b0b0b0" />
      </Ico>
    ),
  },
  {
    key: 'copilot',
    el: (
      <Ico className="h-[22px] w-6" vb="0 0 24 22">
        <defs>
          <linearGradient id="cpa" x1="0" y1="0" x2="0" y2="1">
            <stop offset="0" stopColor="#1aa0f0" />
            <stop offset=".5" stopColor="#35b7a0" />
            <stop offset="1" stopColor="#f4cf1c" />
          </linearGradient>
          <linearGradient id="cpb" x1="1" y1="0" x2="0" y2="1">
            <stop offset="0" stopColor="#a45cf0" />
            <stop offset=".5" stopColor="#ee5db0" />
            <stop offset="1" stopColor="#ff9b4a" />
          </linearGradient>
        </defs>
        <path d="M6 1h9q2 0 3 4h-4q-2 0-3 4l-2 6q-1 3-4 3H3q-4-1-2.500-6L3 4q1-3 3-3z" fill="url(#cpa)" />
        <path d="M18 21H9q-2 0-3-4h4q2 0 3-4l2-6q1-3 4-3h2q4 1 2.500 6L21 18q-1 3-3 3z" fill="url(#cpb)" />
        <path d="M11 1h4q2 0 3 4h-4q-2 0-2.500 1.500z" fill="#1c52d8" />
      </Ico>
    ),
  },
  {
    key: 'files',
    dot: true,
    el: (
      <Ico className="h-[22px] w-6" vb="0 0 24 22">
        <path d="M0 1.500Q0 0 1.500 0H8l3 3h12v18H0z" fill="#e0a015" />
        <path d="M0 6h9l3-3h10.500Q24 3 24 4.500v16q0 1.500-1.500 1.500h-21Q0 22 0 20.500z" fill="#ffd04a" />
        <path d="M4 22v-5q0-2 2-2h11q2 0 2 2v5z" fill="#1480d8" />
        <path d="M7 19h9v1.500H7z" fill="#0a5ba5" />
      </Ico>
    ),
  },
  {
    key: 'store',
    el: (
      <Ico className="h-6 w-6" vb="0 0 24 24">
        <path d="M6.500 6V2q0-1 1-1h9q1 0 1 1v4" stroke="#2ba9e8" strokeWidth="2" />
        <path d="M0 5h24v16q0 3-3 3H3q-3 0-3-3z" fill="#f2f2f2" />
        <path d="M7 9h4.500v4.500H7z" fill="#f25022" />
        <path d="M12.500 9H17v4.500h-4.500z" fill="#7fba00" />
        <path d="M7 14.500h4.500V19H7z" fill="#00a4ef" />
        <path d="M12.500 14.500H17V19h-4.500z" fill="#ffb900" />
      </Ico>
    ),
  },
  { key: 'chrome', dot: true, el: <Chrome /> },
  {
    key: 'code',
    dot: true,
    el: (
      <Ico className="h-6 w-6" vb="0 0 24 24">
        <path d="M18 0L1 15.500v1.800l2 1.700L18 8z" fill="#2196e3" />
        <path d="M18 24L1 8.500V6.700L3 5l15 11z" fill="#1272b8" />
        <path d="M17.500 0L24 3v18l-6.500 3z" fill="#2fa9f4" />
      </Ico>
    ),
  },
  {
    key: 'blender',
    el: (
      <div className="relative flex h-6 w-6 items-center justify-center">
        <div className="absolute top-[7px] left-[9px] h-[11px] w-[12px] rounded-full bg-white" />
        <SiBlender className="relative h-6 w-6 text-[#ea7600]" />
        <div className="absolute top-[10px] left-[13px] h-[6px] w-[6px] rounded-full bg-[#1b5a9a]" />
      </div>
    ),
  },
  {
    key: 'discord',
    dot: true,
    el: (
      <div className="relative flex h-6 w-6 items-center justify-center rounded-full bg-[#5865f2] text-white">
        <FaDiscord className="h-[15px] w-[15px]" />
        <div className="absolute -top-[5px] left-[14px] flex h-[14px] w-[14px] items-center justify-center rounded-full bg-[#f0474c] text-[11px] leading-none font-['Open_Sans',sans-serif]">
          2
        </div>
      </div>
    ),
  },
  {
    key: 'keys',
    el: (
      <Ico className="h-5 w-5" vb="0 0 20 20">
        <defs>
          <linearGradient id="kg" x1="0" x2="0" y1="0" y2="1">
            <stop offset="0" stopColor="#7fa0e6" />
            <stop offset="1" stopColor="#2f49c4" />
          </linearGradient>
        </defs>
        <rect width="20" height="20" rx="3" fill="url(#kg)" />
        <circle cx="12.500" cy="5.500" r="2.800" stroke="#d5e2ff" strokeWidth="1.300" />
        <path d="M11.500 8L7 16M8 14l2 1M9 12l2 1" stroke="#d5e2ff" strokeWidth="1.500" />
      </Ico>
    ),
  },
  { key: 'steam', el: <Steam /> },
  { key: 'fusion', active: true, el: <FusionLogo className="h-6 w-[22px]" /> },
  {
    key: 'figma',
    dot: true,
    el: (
      <Ico className="h-6 w-6" vb="0 0 24 24">
        <path d="M0 0h24v24H0z" fill="#1e1e1e" />
        <path d="M12 4H9.500a2.600 2.600 0 0 0 0 5.200H12z" fill="#f24e1e" />
        <path d="M12 4h2.500a2.600 2.600 0 0 1 0 5.200H12z" fill="#ff7262" />
        <path d="M12 9.200H9.500a2.600 2.600 0 0 0 0 5.200H12z" fill="#a259ff" />
        <circle cx="14.600" cy="11.800" r="2.600" fill="#1abcfe" />
        <path d="M12 14.400H9.500A2.600 2.600 0 1 0 12 17z" fill="#0acf83" />
      </Ico>
    ),
  },
  { key: 'steam2', dot: true, el: <Steam /> },
  {
    key: 'pen',
    dot: true,
    el: (
      <Ico className="h-6 w-6" vb="0 0 24 24">
        <defs>
          <linearGradient id="pg" x1="0" x2="1" y1="0" y2="1">
            <stop offset="0" stopColor="#19e0f5" />
            <stop offset="1" stopColor="#2461f0" />
          </linearGradient>
        </defs>
        <rect width="24" height="24" rx="3" fill="url(#pg)" />
        <path d="M8 14l5-9 4 2.300-5 9L8 19z" fill="#fff" />
        <path d="M12 6.500l4 2.300" stroke="#2c9df0" />
        <path d="M5 20h12l-3 2H5z" fill="#1838c0" opacity=".6" />
      </Ico>
    ),
  },
  {
    key: 'krita',
    dot: true,
    el: (
      <div className="relative h-5 w-5 rounded-full bg-[conic-gradient(#ff5ad0,#e03cf0,#35b8f5,#46e0b0,#f8e03a,#ff7a3c,#ff5ad0)]">
        <svg viewBox="0 0 20 20" className="absolute inset-0 h-5 w-5 overflow-visible" fill="none">
          <path d="M-1 1.500l8 6 4 2 3 4-2 1-4-3-2-3z" fill="#3a3a3a" stroke="#222" strokeWidth="1.500" />
          <path d="M10 10q4 1 5 5-4 0-6-3z" fill="#eee" />
        </svg>
      </div>
    ),
  },
];

const Taskbar = () => (
  <div className="flex h-12 items-center bg-linear-to-r from-[#272a18] via-[#292616] to-[#232519] text-white font-['Open_Sans',sans-serif]">
    <div className="flex w-[507px] items-center pl-[19px]">
      <Ico className="h-[30px] w-6" vb="0 0 24 30">
        <g fill="#f58a12" stroke="#c56300" strokeWidth=".8">
          <path d="M4 13h15v4q-7 4-15 0z" />
          <path d="M7 9h16v4q-8 4-16 0z" />
          <path d="M3 6h15v4q-7 3-15 0z" />
          <ellipse cx="10" cy="4" rx="8.500" ry="3" fill="#ffa52e" />
        </g>
        <path d="M8 28l4-6.500L16 28l-4-2z" fill="#6cc43a" />
      </Ico>
      <div className="ml-[7px] text-[12px] leading-4 tracking-[-0.2px]">
        <div>USD/JPY</div>
        <div className="text-[#6ccb5f]">+0.62%</div>
      </div>
    </div>
    <Ico className="h-[23px] w-[23px]" vb="0 0 23 23">
      <defs>
        <linearGradient id="win" x1="0" y1="0" x2="1" y2="1">
          <stop offset="0" stopColor="#76ecff" />
          <stop offset="1" stopColor="#1590f5" />
        </linearGradient>
      </defs>
      <path d="M0 0h11v11H0zM12 0h11v11H12zM0 12h11v11H0zM12 12h11v11H12z" fill="url(#win)" />
    </Ico>
    <div className="ml-[14px] flex h-[30px] w-[218px] items-center rounded-full bg-[#f3f3f1] text-[#5a5a5a]">
      <Ico className="ml-[11px] h-[15px] w-[15px]" vb="0 0 15 15">
        <circle cx="6" cy="6" r="5" stroke="#222" strokeWidth="1.700" />
        <path d="M9.500 9.500l5 5" stroke="#222" strokeWidth="1.900" />
      </Ico>
      <span className="ml-[10px] text-[13px]">Search</span>
      <Ico className="mr-[7px] ml-auto h-6 w-10" vb="0 0 40 24">
        <path d="M16 21l22-6 2 4-18 5z" fill="#e0d3b0" stroke="#a08c60" strokeWidth=".8" />
        <path d="M2 18q7-5 12-1t12-1l-4 7q-8 2-14-1z" fill="#3fb2cc" />
        <path d="M8 12h17l-2 7q-8 4-13-1z" fill="#8b4a24" />
        <path d="M10 15h3v2h-3zM18 15h3v2h-3z" fill="#e0a040" />
        <path d="M6 6q5-3 9 0l2-5 4 1-1 4q4-1 7 3l-3 4H9z" fill="#403a38" />
        <path d="M17 0v12" stroke="#2a2421" />
        <path d="M28 12l4 3M1 15l4 2M29 9l2 2" stroke="#3fb2cc" strokeWidth="1.500" />
      </Ico>
    </div>
    <div className="ml-[3px] flex h-12">
      {apps.map((a) => (
        <div key={a.key} className="relative flex h-12 w-11 items-center justify-center">
          <div
            className={`flex h-10 w-10 items-center justify-center rounded-[4px] ${a.active ? 'border border-[#45473a] bg-[#3a3b2f]' : ''}`}
          >
            {a.el}
          </div>
          {a.dot && <div className="absolute top-10 h-[3px] w-1.5 rounded-full bg-[#a0a098]" />}
          {a.active && <div className="absolute top-10 h-[3px] w-4 rounded-full bg-[#4cb8f5]" />}
        </div>
      ))}
    </div>
    <Ico className="ml-[172px] h-[7px] w-[11px]" vb="0 0 11 7">
      <path d="M1 6l4.500-4.500L10 6" stroke="#fff" strokeWidth="1.500" />
    </Ico>
    <Ico className="ml-[18px] h-4 w-[17px]" vb="0 0 17 16">
      <path d="M1 6q2-5 7-5 4 0 6 3M14.500 1v4h-4M1.500 15.500v-4h4M2 12q2 3 5 3.500" stroke="#fff" strokeWidth="1.200" />
      <circle cx="12" cy="12" r="4.200" fill="#ff9800" />
    </Ico>
    <Ico className="ml-[15px] h-[14px] w-[17px]" vb="0 0 17 14">
      <path d="M4 10.500a4 4 0 0 1 0-6q3-5 8-2.500 4 2 3 8.500z" fill="#b8b8b0" />
      <circle cx="12" cy="9" r="4.600" fill="#3aa8ee" />
      <path d="M12 8v4M12 6v1" stroke="#0b3350" strokeWidth="1.300" />
    </Ico>
    <div className="ml-[16px] w-[27px] text-center text-[12px] leading-4 tracking-[-0.3px]">
      <div>ENG</div>
      <div>CMS</div>
    </div>
    <Ico className="ml-[17px] h-[13px] w-4" vb="0 0 16 13">
      <path d="M.7 4.500q7.300-7 14.600 0M3 7.300q5-5 10 0M5 9.700q3-3 6 0" stroke="#fff" strokeWidth="1.200" />
      <circle cx="8" cy="11.500" r="1.300" fill="#fff" />
    </Ico>
    <Ico className="ml-[7px] h-3 w-4" vb="0 0 16 12">
      <path d="M1 4h2.500L7 .800v10.400L3.500 8H1zM10 4l5 5M15 4l-5 5" stroke="#fff" />
    </Ico>
    <Ico className="ml-2 h-[14px] w-4" vb="0 0 16 14">
      <path d="M6 3.500h6.500q1.500 0 1.500 1.500v6q0 1-1.500 1h-10q-1.500 0-1.500-1.500V9M15.500 6v3" stroke="#fff" strokeWidth="1.200" />
      <path d="M4 0L1 5h2.500L2 9l4-5H4z" fill="#fff" />
    </Ico>
    <div className="ml-[13px] w-[65px] text-right text-[12px] leading-4 tracking-[-0.25px] whitespace-nowrap">
      <div>11:08 AM</div>
      <div className="-ml-2">11/13/2024</div>
    </div>
    <Ico className="ml-[9px] h-4 w-[14px]" vb="0 0 14 16">
      <path d="M7 0q5 .5 5 6v3l1.700 3.500H.3L2 9V6q0-5.500 5-6zM5 14h4q-2 2.500-4 0z" fill="#8fe3fb" />
    </Ico>
  </div>
);

export default function App() {
  return (
    <div className="flex h-[1080px] w-[1920px] flex-col overflow-hidden bg-white">
      <TitleBar />
      <TabBar />
      <Ribbon />
      <div className="relative h-[842px] overflow-hidden bg-white">
        <Scene />
        <Browser />
        <Comments />
        <NavBar />
        <Ico className="absolute top-[817px] left-[1891px] h-[17px] w-[17px]" vb="0 0 17 17">
          <path d="M8.500 0A8.500 8.500 0 0 1 17 8.500V17H8.500a8.500 8.500 0 0 1 0-17z" fill="#000" />
          <path d="M4 10l4-4h4M7 9l2.500-1.500M9.500 10l3-3" stroke="#fff" />
        </Ico>
      </div>
      <Timeline />
      <Taskbar />
    </div>
  );
}
